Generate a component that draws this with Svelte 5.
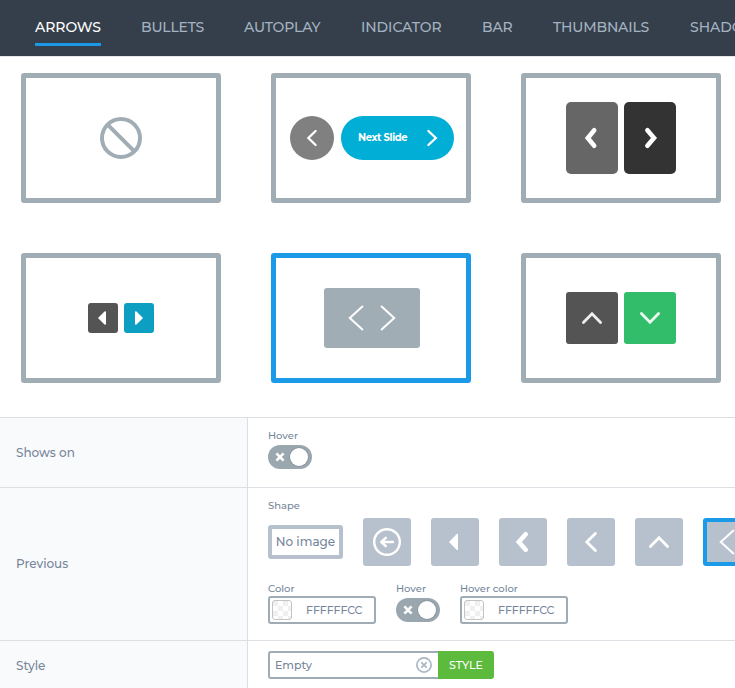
<script>
  const tabs = [
    { label: 'ARROWS', width: 66, spacing: -0.05 },
    { label: 'BULLETS', width: 63, spacing: -0.2 },
    { label: 'AUTOPLAY', width: 77, spacing: -0.15 },
    { label: 'INDICATOR', width: 81, spacing: -0.05 },
    { label: 'BAR', width: 31, spacing: -0.1 },
    { label: 'THUMBNAILS', width: 97, spacing: -0.15 },
    { label: 'SHADOW', width: 66, spacing: 0 }
  ];
  let active = $state('ARROWS');
  let preset = $state(4);
  let shape = $state(5);
</script>

{#snippet chevron(points, stroke, opacity = 1)}
  <svg width="28" height="28" viewBox="-14 -14 28 28" fill="none" stroke="#fff" stroke-opacity={opacity} stroke-width={stroke} stroke-linecap="round" stroke-linejoin="miter"><polyline {points} /></svg>
{/snippet}

{#snippet toggle()}
  <button class="toggle" aria-label="Hover">
    <svg width="10" height="10" viewBox="-5 -5 10 10" stroke="#fff" stroke-width="2.6"><path d="M-3.6-3.6 3.6 3.6M3.6-3.6-3.6 3.6" /></svg>
    <span class="knob"></span>
  </button>
{/snippet}

{#snippet color(label)}
  <div class="field">
    <span class="label">{label}</span>
    <div class="input color"><span class="swatch"></span><span class="hex">FFFFFFCC</span></div>
  </div>
{/snippet}

<div class="page">
  <nav>
    {#each tabs as tab}
      <button class="tab" class:active={active === tab.label} style="width:{tab.width}px;letter-spacing:{tab.spacing}px" onclick={() => (active = tab.label)}>{tab.label}</button>
    {/each}
  </nav>

  <section class="presets">
    {#each [0, 1, 2, 3, 4, 5] as i}
      <button class="preset" class:selected={preset === i} aria-label="Preset {i}" onclick={() => (preset = i)}>
        {#if i === 0}
          <svg width="42" height="42" viewBox="-21 -21 42 42" fill="none" stroke="#a1adb5" stroke-width="4"><circle r="19" /><path d="M-13.4-13.4 13.4 13.4" /></svg>
        {:else if i === 1}
          <span class="pair slide">
            <span class="round">{@render chevron('3.6,-7 -3.6,0 3.6,7', 2.3)}</span>
            <span class="pill"><span class="next">Next Slide</span>{@render chevron('-3.6,-7 3.8,0 -3.6,7', 2.3)}</span>
          </span>
        {:else if i === 2}
          <span class="pair">
            <span class="block tall gray">{@render chevron('2.2,-7.7 -4.2,0 2.2,7.7', 4.6)}</span>
            <span class="block tall black">{@render chevron('-2.6,-7.7 4,0 -2.6,7.7', 4.6)}</span>
          </span>
        {:else if i === 3}
          <span class="pair">
            <span class="block small dark"><svg class="back" width="10" height="14" viewBox="0 0 10 14" fill="#fff"><path d="M1 7 7.5.4Q9 0 9 1V13Q9 14 7.5 13.6Z" /></svg></span>
            <span class="block small cyan"><svg width="10" height="14" viewBox="0 0 10 14" fill="#fff"><path d="M9 7 2.5.4Q1 0 1 1V13Q1 14 2.5 13.6Z" /></svg></span>
          </span>
        {:else if i === 4}
          <span class="plate">
            {@render chevron('6.4,-11.4 -6.2,0 6.4,11.4', 2)}
            {@render chevron('-6.4,-11.4 6.2,0 -6.4,11.4', 2)}
          </span>
        {:else}
          <span class="pair">
            <span class="block square dark">{@render chevron('-8.6,4.6 0,-4.2 8.6,4.6', 2.8, 0.9)}</span>
            <span class="block square green">{@render chevron('-8.6,-4.6 0,4.2 8.6,-4.6', 2.8, 0.9)}</span>
          </span>
        {/if}
      </button>
    {/each}
  </section>

  <div class="row shows">
    <div class="title">Shows on</div>
    <div class="content">
      <div class="field"><span class="label">Hover</span>{@render toggle()}</div>
    </div>
  </div>

  <div class="row previous">
    <div class="title">Previous</div>
    <div class="content">
      <span class="label">Shape</span>
      <div class="shapes">
        <button class="none">No image</button>
        {#each [0, 1, 2, 3, 4, 5] as i}
          <button class="shape" class:selected={shape === i} aria-label="Shape {i}" onclick={() => (shape = i)}>
            {#if i === 0}
              <svg width="28" height="28" viewBox="-14 -14 28 28" fill="none" stroke="#fff" stroke-width="2.4" stroke-linecap="round" stroke-linejoin="round"><circle r="12.8" /><path d="M6 0H-5.5M-1.2-4.2-5.8 0-1.2 4.2" /></svg>
            {:else if i === 1}
              <svg width="28" height="28" viewBox="-14 -14 28 28" fill="#fff"><path d="M-6 0 1.6-7.8Q3-9 3-7V7Q3 9 1.6 7.8Z" /></svg>
            {:else if i === 2}
              {@render chevron('2.7,-7.7 -4.2,0 2.7,7.7', 4.6)}
            {:else if i === 3}
              {@render chevron('4.4,-8.5 -4.2,0 4.4,8.5', 2.8)}
            {:else if i === 4}
              {@render chevron('-8.6,4.6 0,-4.2 8.6,4.6', 2.8)}
            {:else}
              {@render chevron('6.4,-11.4 -6.2,0 6.4,11.4', 2)}
            {/if}
          </button>
        {/each}
      </div>
      <div class="fields">
        {@render color('Color')}
        <div class="field"><span class="label">Hover</span><div class="center">{@render toggle()}</div></div>
        {@render color('Hover color')}
      </div>
    </div>
  </div>

  <div class="row style">
    <div class="title">Style</div>
    <div class="content">
      <div class="combo">
        <div class="input name">
          <span>Empty</span>
          <svg width="16" height="16" viewBox="-8 -8 16 16" fill="none" stroke="#a9b6c2"><circle r="7.1" stroke-width="1.7" /><path stroke-width="1.8" d="M-2.7-2.7 2.7 2.7M2.7-2.7-2.7 2.7" /></svg>
        </div>
        <button class="go">STYLE</button>
      </div>
    </div>
  </div>
</div>

<style>
  :global(body) { margin: 0; overflow: hidden; }
  .page { width: 735px; height: 688px; overflow: hidden; background: #fff; color: #76869a; font: 500 12px/16px Montserrat, Inter, sans-serif; display: flex; flex-direction: column; }
  .page :global(*) { box-sizing: border-box; }
  button { font: inherit; color: inherit; background: none; border: 0; padding: 0; }
  svg { display: block; flex: none; }
  nav { height: 57px; flex: none; background: #343f4b; border-bottom: 1px solid #e3e7eb; padding-left: 35px; display: flex; gap: 40px; overflow: hidden; }
  .tab { flex: none; height: 46px; padding-top: 10px; border-bottom: 3px solid transparent; font-size: 14px; line-height: 20px; color: #a5b3c1; white-space: nowrap; text-align: left; }
  .tab.active { color: #fff; border-color: #1b99e6; }
  .presets { flex: none; height: 360px; padding: 16px 14px 0 21px; display: grid; grid-template-columns: repeat(3, 200px); grid-auto-rows: 130px; gap: 50px; }
  .preset { border: 5px solid #a1adb5; border-radius: 3px; display: flex; align-items: center; justify-content: center; }
  .preset.selected { border-color: #1b9be7; }
  .pair { display: flex; gap: 6px; }
  .slide { gap: 7px; margin-left: 2px; }
  .round, .block, .plate { display: flex; align-items: center; justify-content: center; }
  .round { width: 44px; height: 44px; border-radius: 50%; background: #808080; }
  .pill { width: 113px; height: 44px; border-radius: 22px; background: #00aed6; display: flex; align-items: center; justify-content: space-between; padding: 0 8px 0 17px; }
  .next { color: #fff; font-size: 10px; font-weight: 700; letter-spacing: -0.37px; white-space: nowrap; }
  .block { border-radius: 3px; }
  .tall { width: 52px; height: 72px; border-radius: 5px; }
  .small { width: 30px; height: 30px; }
  .back { margin-right: 2px; }
  .square { width: 52px; height: 52px; }
  .gray { background: #666; }
  .black { background: #333; }
  .dark { background: #545454; }
  .cyan { background: #0d9fc2; }
  .green { background: #32bd6b; }
  .plate { width: 96px; height: 60px; margin-left: 2px; border-radius: 3px; background: #a1adb5; gap: 4px; }
  .row { flex: none; display: flex; border-top: 1px solid #dce0e4; }
  .shows { height: 70px; }
  .previous { height: 153px; }
  .row.style { height: 48px; }
  .title { width: 248px; flex: none; background: #f9fafc; border-right: 1px solid #dce0e4; padding-left: 16px; display: flex; align-items: center; font-size: 12px; letter-spacing: 0; }
  .row.style .title { padding-top: 3px; }
  .content { flex: 1; min-width: 0; overflow: hidden; padding: 11px 0 0 20px; }
  .row.style .content { padding-top: 10px; }
  .label { display: block; font-size: 10px; line-height: 14px; letter-spacing: 0; white-space: nowrap; }
  .shows .label { margin-bottom: 2px; }
  .toggle { width: 44px; height: 24px; border-radius: 12px; background: #9aa7ae; display: flex; align-items: center; justify-content: space-between; padding: 0 4px 0 7px; }
  .knob { width: 18px; height: 18px; border-radius: 50%; background: #fff; box-shadow: 0 0 0 1px #8b989f; }
  .shapes { display: flex; align-items: center; gap: 20px; margin-top: 5px; }
  .none { width: 75px; height: 34px; flex: none; border: 4px solid #b7c1cd; border-radius: 3px; font-size: 12px; white-space: nowrap; }
  .shape { width: 48px; height: 48px; flex: none; border-radius: 3px; background: #b7c1cd; display: flex; align-items: center; justify-content: center; }
  .shape.selected { border: 4px solid #1b9be7; }
  .fields { display: flex; gap: 20px; margin-top: 16px; }
  .center { padding-top: 2px; }
  .input { border: 2px solid #9fabb5; border-radius: 3px; height: 28px; display: flex; align-items: center; }
  .color { width: 108px; padding-left: 2px; gap: 14px; }
  .swatch { width: 20px; height: 20px; border: 1px solid #c4c4c4; border-radius: 3px; background: repeating-conic-gradient(#fff 0 25%, #f0f0f0 0 50%) 0 0 / 10px 10px; }
  .hex { font-size: 11px; letter-spacing: -0.1px; }
  .combo { display: flex; }
  .name { width: 170px; border-right: 0; border-radius: 3px 0 0 3px; padding: 0 6px 0 5px; justify-content: space-between; font-size: 11px; }
  .go { width: 56px; height: 28px; background: #5cba3c; color: #fff; border-radius: 0 3px 3px 0; font-size: 11px; }
</style>
